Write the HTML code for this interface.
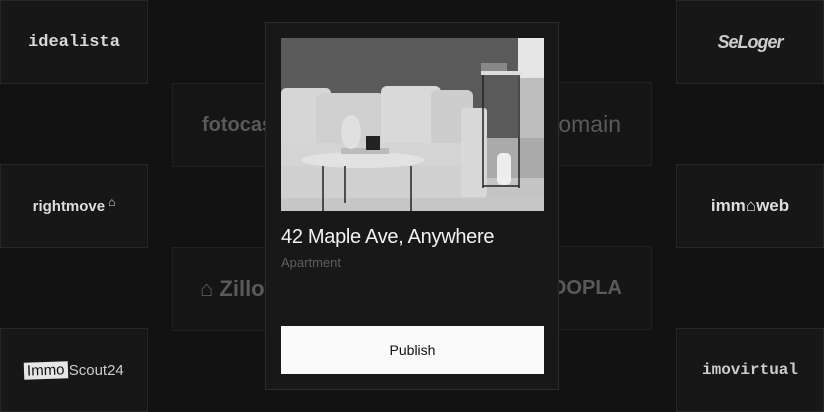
<!DOCTYPE html>
<html><head><meta charset="utf-8"><style>
*{margin:0;padding:0;box-sizing:border-box}
body{width:824px;height:412px;background:#121212;position:relative;overflow:hidden;font-family:"Liberation Sans",sans-serif}
.t{position:absolute;background:#171717;border:1px solid #262626;display:flex;align-items:center;justify-content:center;color:#ddd;font-weight:bold}
.f{color:#5a5a5a;background:#151515;border-color:#202020}
.card{position:absolute;left:265px;top:22px;width:294px;height:368px;background:#181818;border:1px solid #2c2c2c}
</style></head><body>
<div class="t" style="left:0;top:0;width:148px;height:84px;font-family:'Liberation Mono',monospace;font-size:17px;color:#d8d8d8">idealista</div>
<div class="t" style="left:0;top:164px;width:148px;height:84px;font-size:15px">rightmove<span style="font-size:12px;margin-left:3px;margin-top:-8px">⌂</span></div>
<div class="t" style="left:0;top:328px;width:148px;height:84px;font-size:15px;font-weight:normal;color:#ccc"><span style="background:#e6e6e6;color:#111;padding:0 3px;margin-right:1px;transform:rotate(-2deg)">Immo</span>Scout24</div>
<div class="t f" style="left:172px;top:83px;width:120px;height:84px;justify-content:flex-start;padding-left:29px;font-size:20px">fotocasa</div>
<div class="t f" style="left:172px;top:247px;width:120px;height:84px;justify-content:flex-start;padding-left:27px;font-size:22px">⌂ Zillow</div>
<div class="t f" style="left:530px;top:82px;width:122px;height:84px;justify-content:flex-end;padding-right:30px;font-size:23px;font-weight:normal">Domain</div>
<div class="t f" style="left:530px;top:246px;width:122px;height:84px;justify-content:flex-end;padding-right:29px;font-size:20px">ZOOPLA</div>
<div class="t" style="left:676px;top:0;width:148px;height:84px;font-size:18px;font-style:italic;letter-spacing:-1px;color:#ccc">SeLoger</div>
<div class="t" style="left:676px;top:164px;width:148px;height:84px;font-size:17px;color:#ddd">imm⌂web</div>
<div class="t" style="left:676px;top:328px;width:148px;height:84px;font-size:16px;font-family:'Liberation Mono',monospace;color:#ccc">imovirtual</div>
<div class="card">
<svg style="position:absolute;left:15px;top:15px" width="263" height="173" viewBox="0 0 263 173">
<rect width="263" height="173" fill="#5a5a5a"/>
<rect x="237" y="0" width="26" height="40" fill="#e6e6e6"/>
<rect x="237" y="40" width="26" height="70" fill="#bdbdbd"/>
<rect x="0" y="135" width="263" height="38" fill="#c4c4c4"/>
<rect x="195" y="100" width="68" height="40" fill="#aaa"/>
<rect x="0" y="50" width="50" height="60" rx="5" fill="#d6d6d6"/>
<rect x="35" y="55" width="70" height="55" rx="8" fill="#cfcfcf"/>
<rect x="100" y="48" width="60" height="60" rx="6" fill="#d9d9d9"/>
<rect x="150" y="52" width="42" height="56" rx="6" fill="#cdcdcd"/>
<rect x="0" y="105" width="200" height="33" fill="#d4d4d4"/>
<rect x="0" y="128" width="205" height="45" fill="#d0d0d0"/>
<rect x="180" y="70" width="26" height="89" rx="3" fill="#d8d8d8"/>
<rect x="0" y="160" width="263" height="13" fill="#c6c6c6"/>
<rect x="200" y="33" width="40" height="4" fill="#ddd"/>
<rect x="200" y="25" width="26" height="8" fill="#888"/>
<g stroke="#222" stroke-width="1.5"><line x1="202" y1="37" x2="202" y2="150"/><line x1="238" y1="37" x2="238" y2="150"/><line x1="202" y1="148" x2="238" y2="148"/></g>
<rect x="216" y="115" width="14" height="32" rx="5" fill="#eee"/>
<ellipse cx="82" cy="122" rx="62" ry="8" fill="#e2e2e2"/>
<g stroke="#222" stroke-width="1.5"><line x1="42" y1="128" x2="42" y2="173"/><line x1="64" y1="128" x2="64" y2="165"/><line x1="130" y1="128" x2="130" y2="173"/></g>
<rect x="60" y="110" width="48" height="6" fill="#bbb"/>
<ellipse cx="70" cy="94" rx="10" ry="17" fill="#e0e0e0"/>
<rect x="85" y="98" width="14" height="14" fill="#222"/>
</svg>
<div style="position:absolute;left:15px;top:203px;font-size:20px;color:#f2f2f2;letter-spacing:-0.3px">42 Maple Ave, Anywhere</div>
<div style="position:absolute;left:15px;top:232px;font-size:13px;color:#5e5e5e">Apartment</div>
<div style="position:absolute;left:15px;top:303px;width:263px;height:48px;background:#fafafa;color:#111;font-size:14px;display:flex;align-items:center;justify-content:center">Publish</div>
</div>
</body></html>
